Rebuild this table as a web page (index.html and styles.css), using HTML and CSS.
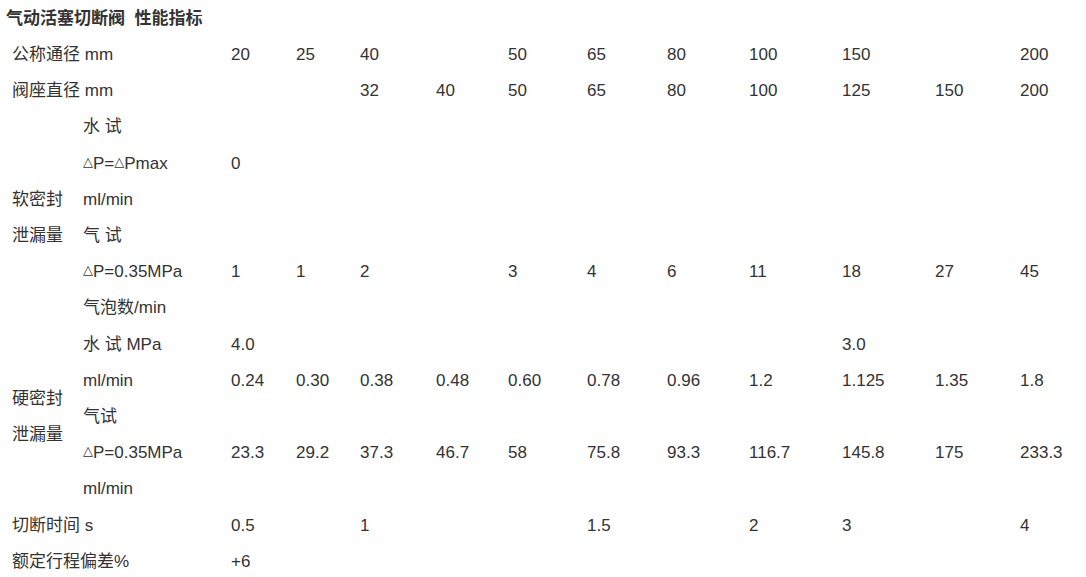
FILE: index.html
```
<!DOCTYPE html>
<html lang="zh-CN">
<head>
<meta charset="utf-8">
<title>气动活塞切断阀 性能指标</title>
<link rel="stylesheet" href="styles.css">
</head>
<body>
<div class="page">
  <h2 class="title">气动活塞切断阀&nbsp; 性能指标</h2>
  <table class="spec">
    <colgroup>
      <col class="w1"><col class="w2"><col class="w3"><col class="w4"><col class="w5"><col class="w6"><col class="w7"><col class="w8"><col class="w9"><col class="w10"><col class="w11"><col class="w12"><col class="w13">
    </colgroup>
    <tbody>
      <tr><td colspan="2">公称通径 mm</td><td>20</td><td>25</td><td>40</td><td></td><td>50</td><td>65</td><td>80</td><td>100</td><td>150</td><td></td><td>200</td></tr>
      <tr><td colspan="2">阀座直径 mm</td><td></td><td></td><td>32</td><td>40</td><td>50</td><td>65</td><td>80</td><td>100</td><td>125</td><td>150</td><td>200</td></tr>
      <tr><td rowspan="6" class="group">软密封<br>泄漏量</td><td>水 试</td><td></td><td></td><td></td><td></td><td></td><td></td><td></td><td></td><td></td><td></td><td></td></tr>
      <tr><td><span class="tri">△</span>P=<span class="tri">△</span>Pmax</td><td>0</td><td></td><td></td><td></td><td></td><td></td><td></td><td></td><td></td><td></td><td></td></tr>
      <tr><td>ml/min</td><td></td><td></td><td></td><td></td><td></td><td></td><td></td><td></td><td></td><td></td><td></td></tr>
      <tr><td>气 试</td><td></td><td></td><td></td><td></td><td></td><td></td><td></td><td></td><td></td><td></td><td></td></tr>
      <tr><td><span class="tri">△</span>P=0.35MPa</td><td>1</td><td>1</td><td>2</td><td></td><td>3</td><td>4</td><td>6</td><td>11</td><td>18</td><td>27</td><td>45</td></tr>
      <tr><td>气泡数/min</td><td></td><td></td><td></td><td></td><td></td><td></td><td></td><td></td><td></td><td></td><td></td></tr>
      <tr><td rowspan="5" class="group">硬密封<br>泄漏量</td><td>水 试 MPa</td><td>4.0</td><td></td><td></td><td></td><td></td><td></td><td></td><td></td><td>3.0</td><td></td><td></td></tr>
      <tr><td>ml/min</td><td>0.24</td><td>0.30</td><td>0.38</td><td>0.48</td><td>0.60</td><td>0.78</td><td>0.96</td><td>1.2</td><td>1.125</td><td>1.35</td><td>1.8</td></tr>
      <tr><td>气试</td><td></td><td></td><td></td><td></td><td></td><td></td><td></td><td></td><td></td><td></td><td></td></tr>
      <tr><td><span class="tri">△</span>P=0.35MPa</td><td>23.3</td><td>29.2</td><td>37.3</td><td>46.7</td><td>58</td><td>75.8</td><td>93.3</td><td>116.7</td><td>145.8</td><td>175</td><td>233.3</td></tr>
      <tr><td>ml/min</td><td></td><td></td><td></td><td></td><td></td><td></td><td></td><td></td><td></td><td></td><td></td></tr>
      <tr><td colspan="2">切断时间 s</td><td>0.5</td><td></td><td>1</td><td></td><td></td><td>1.5</td><td></td><td>2</td><td>3</td><td></td><td>4</td></tr>
      <tr><td colspan="2">额定行程偏差%</td><td>+6</td><td></td><td></td><td></td><td></td><td></td><td></td><td></td><td></td><td></td><td></td></tr>
    </tbody>
  </table>
</div>
</body>
</html>
```
FILE: styles.css
```
html, body {
  margin: 0;
  padding: 0;
  background: #ffffff;
}

body {
  font-family: "Liberation Sans", Arial, "Noto Sans CJK SC", sans-serif;
  font-size: 17px;
  color: #333333;
}

.page {
  width: 1086px;
  overflow: hidden;
}

.title {
  margin: 0;
  padding-left: 6px;
  font-size: 17px;
  font-weight: bold;
  line-height: 37px;
  color: #333333;
  white-space: nowrap;
}

.spec {
  margin-left: 12px;
  width: 1074px;
  table-layout: fixed;
  border-collapse: collapse;
  border-spacing: 0;
}

.spec td {
  padding: 0;
  line-height: 36.2px;
  height: 36.2px;
  text-align: left;
  vertical-align: middle;
  white-space: nowrap;
}

.spec td.group {
  line-height: 36px;
}

.tri {
  display: inline-block;
  width: 10px;
  font-family: "DejaVu Sans", sans-serif;
  font-size: 13px;
  vertical-align: 3px;
  line-height: 1;
}

.w1 { width: 71px; }
.w2 { width: 148px; }
.w3 { width: 65px; }
.w4 { width: 64px; }
.w5 { width: 76px; }
.w6 { width: 72px; }
.w7 { width: 79px; }
.w8 { width: 80px; }
.w9 { width: 82px; }
.w10 { width: 93px; }
.w11 { width: 93px; }
.w12 { width: 85px; }
.w13 { width: 66px; }
```
